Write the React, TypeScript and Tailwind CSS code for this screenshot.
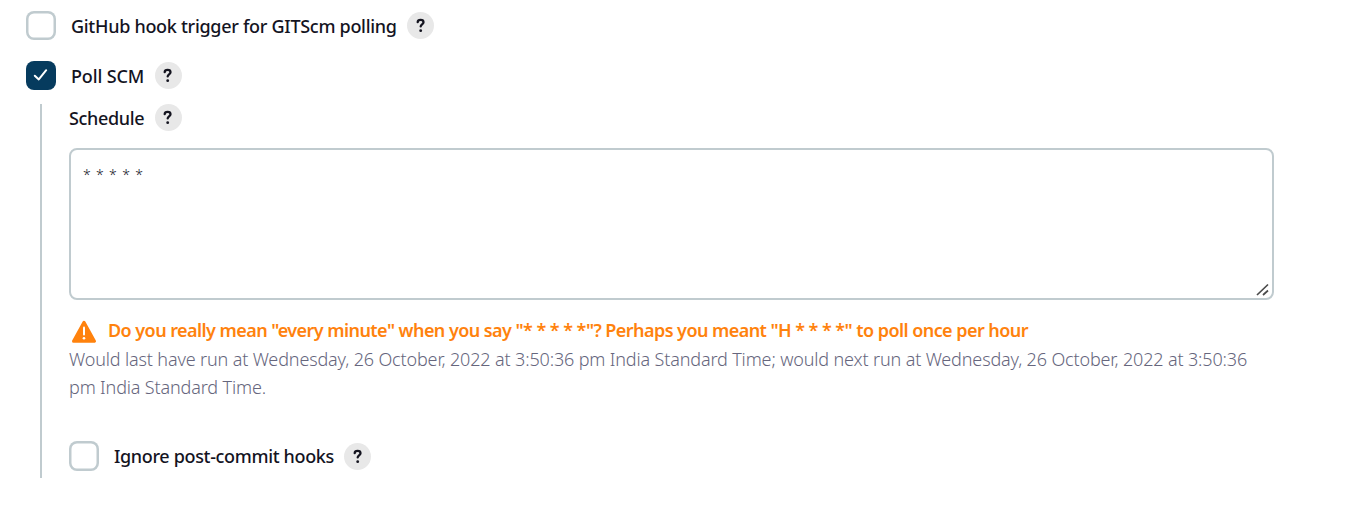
import type { ReactNode } from "react";

function Help({ className = "" }: { className?: string }) {
  return (
    <button
      type="button"
      aria-label="Help"
      className={"flex size-[27px] shrink-0 items-center justify-center rounded-full bg-[#e8e8e8] text-[#14141f] " + className}
    >
      <svg width="25" height="27" viewBox="1 0 25 27" fill="none" stroke="currentColor" strokeWidth="2.3" strokeLinecap="round" strokeLinejoin="round">
        <path d="M9.7 10.1C9.8 8.6 11 7.9 12.6 7.9C14.4 7.9 15.5 8.8 15.5 10.2C15.5 12.3 12.7 12.3 12.7 14.4" />
        <circle cx="12.7" cy="18.7" r="1.4" fill="currentColor" stroke="none" />
      </svg>
    </button>
  );
}

function Checkbox({ checked = false, className = "h-[29px]" }: { checked?: boolean; className?: string }) {
  return (
    <span
      role="checkbox"
      aria-checked={checked}
      className={
        (checked
          ? "flex w-[30px] shrink-0 items-center justify-center rounded-[8px] bg-[#063b5e] "
          : "w-[30px] shrink-0 rounded-[8px] bg-white shadow-[inset_0_0_0_2.5px_#c0cbcf] ") + className
      }
    >
      {checked && (
        <svg width="30" height="29" viewBox="0 0 30 29" fill="none" stroke="white" strokeWidth="2" strokeLinecap="round" strokeLinejoin="round">
          <path d="M8.8 14.7L12.8 18.4L20.2 9.2" />
        </svg>
      )}
    </span>
  );
}

function Label({ children, className }: { children: ReactNode; className: string }) {
  return <span className={"whitespace-pre text-[18px] leading-[28px] font-medium text-[#14141f] " + className}>{children}</span>;
}

export default function App() {
  return (
    <main className="h-[512px] w-full overflow-hidden bg-white pt-[11px] pl-[26px] font-['Noto_Sans',sans-serif]">
      <div className="flex h-[29px] items-center">
        <Checkbox />
        <Label className="ml-[15px] w-[336px] tracking-[-0.29px]">GitHub hook trigger for GITScm polling</Label>
        <Help className="pl-px" />
      </div>
      <div className="mt-[21px] flex h-[29px] items-center">
        <Checkbox checked />
        <Label className="ml-[15px] w-[84px] tracking-[-0.15px]">Poll SCM</Label>
        <Help />
      </div>
      <section className="mt-[14px] ml-[14px] h-[374px] w-[1234px] border-l-2 border-[#c0cbcf] pl-[27px]">
        <div className="flex h-[27px] items-center">
          <Label className="w-[86px] tracking-[-0.33px]">Schedule</Label>
          <Help />
        </div>
        <div className="mt-[17px] flex h-[152px] items-end justify-between rounded-[8px] border-2 border-[#c0cbcf]">
          <span className="self-start pt-[12px] pl-[12px] text-[14px] leading-[26px] font-light [word-spacing:1.7px] text-[#14141f]">* * * * *</span>
          <svg width="14" height="14" viewBox="0 0 14 14" className="mr-[2px] mb-[1px]" stroke="#4b4b4b" strokeWidth="1.7">
            <path d="M1 12L12 1.5M7 12L12 7.5" />
          </svg>
        </div>
        <div className="mt-[16px] flex h-[28px] items-center">
          <svg width="26" height="24" viewBox="0 0 26 24" className="mt-[4px] ml-[2px] shrink-0">
            <path d="M13 2.2L23.5 21.2H2.5Z" fill="#ff820d" stroke="#ff820d" strokeWidth="3" strokeLinejoin="round" />
            <path d="M13 7.5V14.5" stroke="white" strokeWidth="2" strokeLinecap="round" />
            <circle cx="13" cy="18.3" r="1.3" fill="white" />
          </svg>
          <span className="ml-[11px] text-[18px] leading-[28px] font-semibold tracking-[-0.56px] whitespace-pre text-[#ff820d]">
            {'Do you really mean "every minute" when you say "* * * * *"? Perhaps you meant "H * * * *" to poll once per hour'}
          </span>
        </div>
        <p className="mt-[1px] text-[18px] leading-[28px] font-light tracking-[-0.146px] whitespace-pre text-[#66667d]">
          Would last have run at Wednesday, 26 October, 2022 at 3:50:36 pm India Standard Time; would next run at Wednesday, 26 October, 2022 at 3:50:36
          <br />
          pm India Standard Time.
        </p>
        <div className="mt-[40px] flex h-[30px] items-center">
          <Checkbox className="h-[30px]" />
          <Label className="ml-[15px] w-[230px] tracking-[-0.34px]">Ignore post-commit hooks</Label>
          <Help className="mt-[1px] pl-px" />
        </div>
      </section>
    </main>
  );
}
